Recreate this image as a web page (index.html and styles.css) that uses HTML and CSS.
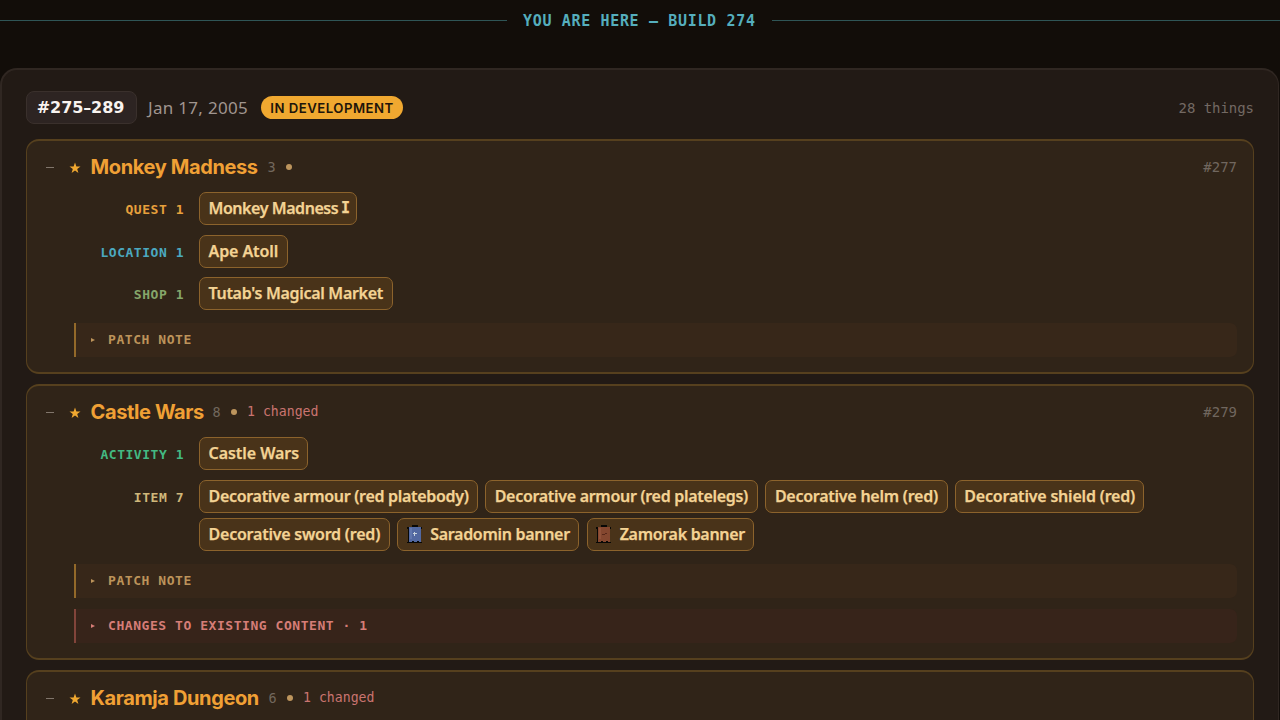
FILE: index.html
```html
<!DOCTYPE html>
<html lang="en">
<head>
<meta charset="utf-8">
<title>Build timeline</title>
<link rel="stylesheet" href="styles.css">
</head>
<body>
<div class="marker"><span class="marker-text">YOU ARE HERE — BUILD 274</span></div>
<main class="build">
  <header class="build-head">
    <span class="build-id">#275–289</span>
    <span class="build-date">Jan 17, 2005</span>
    <span class="status">IN DEVELOPMENT</span>
    <span class="total">28 things</span>
  </header>

  <section class="group group-first">
    <div class="group-head">
      <span class="toggle"></span>
      <svg class="star" viewBox="0 0 12 12"><path d="M6 .5 7.4 4.4 11.5 4.5 8.2 7 9.4 11 6 8.6 2.6 11 3.8 7 .5 4.5 4.6 4.4Z"/></svg>
      <h2 class="title t-monkey">Monkey Madness</h2>
      <span class="count">3</span><span class="dot"></span>
      <span class="ref">#277</span>
    </div>
    <div class="row"><span class="label quest">QUEST 1</span><div class="chips"><span class="chip w-mm">Monkey Madness <span class="slab">I</span></span></div></div>
    <div class="row"><span class="label location">LOCATION 1</span><div class="chips"><span class="chip w-ape">Ape Atoll</span></div></div>
    <div class="row"><span class="label shop">SHOP 1</span><div class="chips"><span class="chip w-tutab">Tutab's Magical Market</span></div></div>
    <div class="note"><i class="caret"></i>PATCH NOTE</div>
  </section>

  <section class="group group-second">
    <div class="group-head">
      <span class="toggle"></span>
      <svg class="star" viewBox="0 0 12 12"><path d="M6 .5 7.4 4.4 11.5 4.5 8.2 7 9.4 11 6 8.6 2.6 11 3.8 7 .5 4.5 4.6 4.4Z"/></svg>
      <h2 class="title t-castle">Castle Wars</h2>
      <span class="count">8</span><span class="dot"></span><span class="changed">1 changed</span>
      <span class="ref">#279</span>
    </div>
    <div class="row"><span class="label activity">ACTIVITY 1</span><div class="chips"><span class="chip w-cw">Castle Wars</span></div></div>
    <div class="row"><span class="label item">ITEM 7</span><div class="chips">
      <span class="chip w-body">Decorative armour (red platebody)</span>
      <span class="chip w-legs">Decorative armour (red platelegs)</span>
      <span class="chip w-helm">Decorative helm (red)</span>
      <span class="chip w-shield">Decorative shield (red)</span>
      <span class="chip w-sword">Decorative sword (red)</span>
      <span class="chip w-sara"><svg class="banner" viewBox="0 0 15 19"><path fill="#080806" d="M5 0h6v2h4v2h-1v13h1v1H0v-1h1V4H0V2h5z"/><path fill="#5268a0" d="M2 2h12v15h-2v-1h-2v1H7v-1H5v1H2z"/><path fill="#6177ae" d="M3 3h2v11H3z"/><path fill="#c8d3dd" d="M7 7h1v1h2v1H8v2H7V9H6V8h1z"/></svg>Saradomin banner</span>
      <span class="chip w-zam"><svg class="banner" viewBox="0 0 15 19"><path fill="#080806" d="M5 0h6v2h4v2h-1v13h1v1H0v-1h1V4H0V2h5z"/><path fill="#84472f" d="M2 2h12v15h-2v-1h-2v1H7v-1H5v1H2z"/><path fill="#91523a" d="M3 3h2v11H3z"/><path fill="#572719" d="M6 9h3V8h2v1H9v1H6z"/></svg>Zamorak banner</span>
    </div></div>
    <div class="note"><i class="caret"></i>PATCH NOTE</div>
    <div class="note note-change"><i class="caret"></i>CHANGES TO EXISTING CONTENT · 1</div>
  </section>

  <section class="group group-third">
    <div class="group-head">
      <span class="toggle"></span>
      <svg class="star" viewBox="0 0 12 12"><path d="M6 .5 7.4 4.4 11.5 4.5 8.2 7 9.4 11 6 8.6 2.6 11 3.8 7 .5 4.5 4.6 4.4Z"/></svg>
      <h2 class="title t-karamja">Karamja Dungeon</h2>
      <span class="count">6</span><span class="dot"></span><span class="changed">1 changed</span>
    </div>
  </section>
</main>
</body>
</html>
```
FILE: styles.css
```css
* { box-sizing: border-box; }
html, body { height: 720px; overflow: hidden; }
body {
  margin: 0;
  background: #120d09;
  font-family: "Noto Sans", sans-serif;
}
.marker {
  display: flex;
  align-items: center;
  gap: 16px;
  height: 41px;
  margin-bottom: 27px;
}
.marker::before, .marker::after {
  content: "";
  height: 1px;
  flex: 1;
  background: #2f5556;
}
.marker::before { flex: 0 0 507px; }
.marker-text {
  width: 233px;
  white-space: nowrap;
  font: bold 15px/20px "DejaVu Sans Mono", monospace;
  letter-spacing: 0.66px;
  padding-top: 1px;
  color: #55aebd;
}
.build {
  height: 652px;
  padding: 21px 24px 0 24px;
  border: 2px solid #302722;
  border-right-width: 1px;
  border-bottom: 0;
  margin-right: 1px;
  border-radius: 17px 17px 0 0;
  background: #221a15;
}
.build-head {
  display: flex;
  align-items: center;
  height: 33px;
  margin-bottom: 15px;
}
.build-id {
  width: 111px;
  height: 33px;
  border: 1px solid #3a302c;
  border-radius: 8px;
  background: #2d2422;
  color: #f8f3ef;
  font: bold 16px/32px "DejaVu Sans", sans-serif;
  letter-spacing: -0.1px;
  text-indent: -2px;
  text-align: center;
  white-space: nowrap;
}
.build-date {
  width: 102px;
  margin-left: 11px;
  font-size: 17px;
  letter-spacing: 0.3px;
  color: #a0958f;
  white-space: nowrap;
}
.status {
  width: 142px;
  height: 23px;
  margin-left: 11px;
  border-radius: 12px;
  background: #f0a830;
  color: #20140a;
  font: 600 13.2px/24px Inter, sans-serif;
  letter-spacing: 0.48px;
  text-align: center;
  white-space: nowrap;
}
.total {
  margin-left: auto;
  font: 14px/20px "DejaVu Sans Mono", monospace;
  letter-spacing: -0.05px;
  color: #736963;
}
.group {
  width: 1228px;
  margin: 0 0 10px;
  padding: 9px 16px 0 18px;
  border: solid #56401e;
  border-width: 2px 1px;
  border-radius: 13px;
  background: #302418;
}
.group-first { height: 235px; }
.group-second { height: 276px; }
.group-third {
  height: 50px;
  margin-bottom: 0;
  border-bottom: 0;
  border-radius: 13px 13px 0 0;
}
.group-head {
  display: flex;
  align-items: center;
  height: 33px;
  margin-bottom: 9.3px;
}
.toggle { width: 8px; height: 1px; margin: 2px 15px 0 1px; background: #81766b; }
.star { width: 12px; height: 12px; margin: 3px 9.5px 0 0; fill: #f0a830; flex: none; }
.title {
  margin: 0;
  font: bold 20px/28px Inter, sans-serif;
  letter-spacing: -0.38px;
  color: #f0a035;
  white-space: nowrap;
}
.t-monkey { width: 168px; }
.t-castle { width: 113px; }
.t-karamja { width: 169px; }
.count {
  width: 9px;
  margin-left: 9px;
  font: 13.5px/20px "DejaVu Sans Mono", monospace;
  color: #72685d;
}
.dot { width: 6px; height: 6px; margin: 1px 0 0 9.5px; border-radius: 50%; background: #bd955d; }
.changed {
  margin-left: 10px;
  font: 13.2px/20px "DejaVu Sans Mono", monospace;
  color: #ca7470;
}
.ref {
  margin-left: auto;
  font: 14px/20px "DejaVu Sans Mono", monospace;
  color: #70675f;
}
.row { display: flex; margin-bottom: 9.3px; }
.label {
  width: 139px;
  margin-right: 15px;
  text-align: right;
  font: bold 13px/35px "DejaVu Sans Mono", monospace;
  letter-spacing: 0.53px;
  height: 33px;
  white-space: nowrap;
}
.quest { color: #e7a03c; }
.location { color: #4ba9c0; }
.shop { color: #85a66a; }
.activity { color: #43b982; }
.item { color: #cfb77a; }
.chips { display: flex; flex-wrap: wrap; gap: 5.4px 7.2px; width: 980px; }
.chip {
  display: flex;
  align-items: center;
  height: 33px;
  padding: 0 0 1px 8.5px;
  border: 1px solid #8c632c;
  border-radius: 7px;
  background: #493319;
  color: #f4d394;
  font: 600 16px/30px "Noto Sans", sans-serif;
  letter-spacing: -0.3px;
  -webkit-text-stroke: 0.25px #f4d394;
  white-space: pre;
}
.slab { font-family: "DejaVu Sans Mono", monospace; font-weight: bold; font-size: 15px; margin-left: -1px; }
.w-mm { width: 158.4px; letter-spacing: -0.44px; }
.w-ape { width: 88.5px; letter-spacing: -0.1px; }
.w-tutab { width: 193.5px; }
.w-cw { width: 109px; letter-spacing: -0.05px; }
.w-body { width: 279px; }
.w-legs { width: 273px; }
.w-helm { width: 182.3px; letter-spacing: -0.25px; }
.w-shield { width: 189.5px; letter-spacing: -0.2px; }
.w-sword { width: 191px; letter-spacing: -0.22px; }
.w-sara { width: 182.3px; }
.w-zam { width: 167.7px; }
.banner { width: 15px; height: 19px; margin: 1px 8.5px 0 0; shape-rendering: crispEdges; }
.note {
  display: flex;
  align-items: center;
  height: 34px;
  margin: 12.8px 0 0 29px;
  padding-left: 14px;
  border-left: 2.6px solid #936929;
  border-radius: 0 7px 7px 0;
  background: #372719;
  color: #bc935a;
  font: bold 13px/34px "DejaVu Sans Mono", monospace;
  letter-spacing: 0.55px;
}
.note + .note { margin-top: 11px; }
.note-change { border-color: #81443a; background: #37241a; color: #d67d77; }
.caret {
  margin: 0 13px 0 1px;
  border: 2px solid transparent;
  border-left: 4px solid currentColor;
  border-right: 0;
}
```
